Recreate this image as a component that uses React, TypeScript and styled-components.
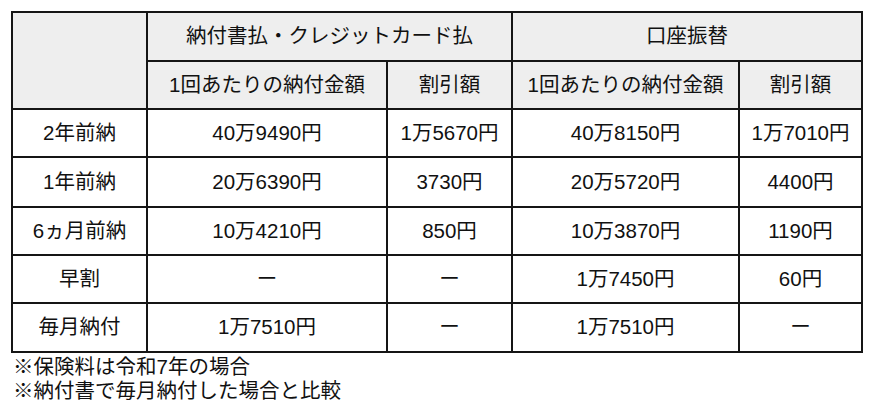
import React from "react";
import styled, { createGlobalStyle } from "styled-components";

const Global = createGlobalStyle`
  html, body { margin: 0; padding: 0; background: #ffffff; }
  body { font-family: "Liberation Sans", "Noto Sans CJK JP", sans-serif; color: #111; }
`;

const Page = styled.div`
  padding: 11px 0 0 11px;
  width: 870px;
  box-sizing: border-box;
`;

const Table = styled.table`
  border-collapse: collapse;
  table-layout: fixed;
  width: 850px;
  font-size: 20.5px;
`;

const Cell = styled.td<{ $head?: boolean; $h?: number }>`
  border: 2px solid #151515;
  background: ${(p) => (p.$head ? "#eeeeee" : "#ffffff")};
  text-align: center;
  vertical-align: middle;
  padding: 0;
  height: ${(p) => p.$h ?? 46}px;
  white-space: nowrap;
  line-height: 1;
  color: #111;
`;

const Notes = styled.div`
  padding: 2px 0 0 2px;
  font-size: 20.5px;
  line-height: 24px;
  color: #111;
`;

type Row = { label: string; vals: string[]; h: number };

const rows: Row[] = [
  { label: "2年前納", vals: ["40万9490円", "1万5670円", "40万8150円", "1万7010円"], h: 46 },
  { label: "1年前納", vals: ["20万6390円", "3730円", "20万5720円", "4400円"], h: 48 },
  { label: "6ヵ月前納", vals: ["10万4210円", "850円", "10万3870円", "1190円"], h: 46 },
  { label: "早割", vals: ["ー", "ー", "1万7450円", "60円"], h: 46 },
  { label: "毎月納付", vals: ["1万7510円", "ー", "1万7510円", "ー"], h: 47 },
];

export default function App() {
  return (
    <Page>
      <Global />
      <Table>
        <colgroup>
          <col style={{ width: 135 }} />
          <col style={{ width: 240 }} />
          <col style={{ width: 125 }} />
          <col style={{ width: 227 }} />
          <col style={{ width: 123 }} />
        </colgroup>
        <tbody>
          <tr>
            <Cell $head rowSpan={2} />
            <Cell $head colSpan={2} $h={47}>納付書払・クレジットカード払</Cell>
            <Cell $head colSpan={2} $h={47}>口座振替</Cell>
          </tr>
          <tr>
            <Cell $head $h={46}>1回あたりの納付金額</Cell>
            <Cell $head $h={46}>割引額</Cell>
            <Cell $head $h={46}>1回あたりの納付金額</Cell>
            <Cell $head $h={46}>割引額</Cell>
          </tr>
          {rows.map((r) => (
            <tr key={r.label}>
              <Cell $h={r.h}>{r.label}</Cell>
              {r.vals.map((v, i) => (
                <Cell key={i} $h={r.h}>{v}</Cell>
              ))}
            </tr>
          ))}
        </tbody>
      </Table>
      <Notes>
        <div>※保険料は令和7年の場合</div>
        <div>※納付書で毎月納付した場合と比較</div>
      </Notes>
    </Page>
  );
}
